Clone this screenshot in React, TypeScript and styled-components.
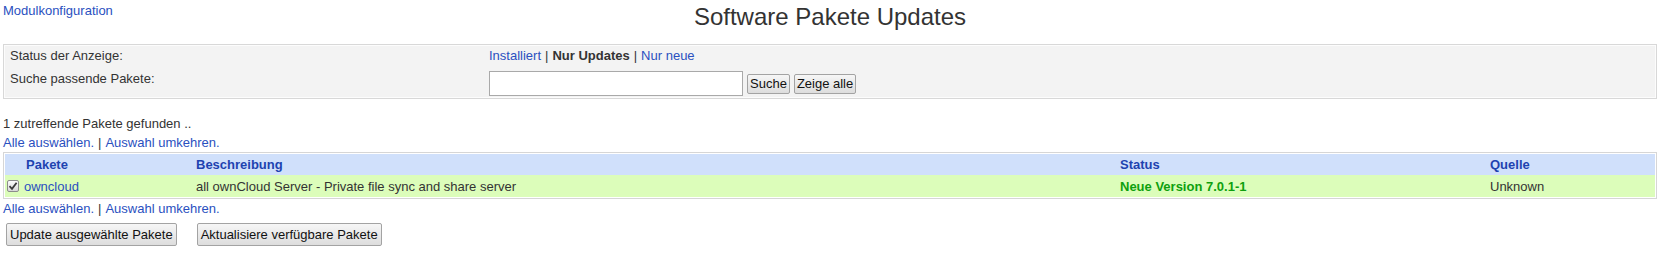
import styled, { createGlobalStyle } from "styled-components";

const GlobalStyle = createGlobalStyle`
  body {
    margin: 0;
    background: #fff;
    color: #333;
    font-family: "Liberation Sans", Arial, sans-serif;
    font-size: 13px;
  }
`;

const Page = styled.div`
  padding: 3px 8px 0 3px;
`;

const TopBar = styled.div`
  display: grid;
  grid-template-columns: 1fr auto 1fr;
  align-items: start;
`;

const Link = styled.a`
  color: #2a50c0;
  text-decoration: none;
  cursor: pointer;
`;

const ModuleLink = styled(Link)`
  line-height: 15px;
`;

const Title = styled.h1`
  margin: 0;
  font-size: 24px;
  font-weight: normal;
  line-height: 28px;
  color: #333;
`;

const FilterBox = styled.div`
  margin-top: 13px;
  border: 1px solid #d8d8d8;
  box-shadow: inset 0 0 0 1px #fcfcfc;
  background: #f3f3f3;
  padding: 3px 5px 2px 6px;
  display: grid;
  grid-template-columns: 479px 1fr;
  row-gap: 7px;
  align-items: start;
  line-height: 16px;
`;

const Sep = styled.span`
  color: #333;
  padding: 0 4px;
`;

const Current = styled.b`
  color: #333;
`;

const SearchRow = styled.div`
  display: flex;
  align-items: center;
  gap: 4px;
`;

const SearchInput = styled.input`
  box-sizing: border-box;
  width: 254px;
  height: 25px;
  margin: 0;
  border: 1px solid #a9a9a9;
  background: #fff;
  font: inherit;
`;

const Button = styled.button<{ $big?: boolean }>`
  box-sizing: border-box;
  height: ${(p) => (p.$big ? "23px" : "20px")};
  margin: 0;
  padding: 0 ${(p) => (p.$big ? "3px" : "2px")};
  border: 1px solid #a3a3a3;
  border-radius: 2px;
  background: linear-gradient(#f6f6f6, #dddddd);
  color: #111;
  font-family: "Liberation Sans", Arial, sans-serif;
  font-size: 13px;
`;

const InfoLine = styled.div<{ $gap?: number }>`
  margin-top: ${(p) => p.$gap ?? 0}px;
  line-height: 19px;
`;

const Table = styled.div`
  border: 1px solid #d6d6d6;
  padding: 1px;
  background: #fff;
`;

const Row = styled.div<{ $head?: boolean }>`
  display: grid;
  grid-template-columns: 187px 924px 370px 1fr;
  align-items: center;
  height: ${(p) => (p.$head ? "21px" : "22px")};
  background: ${(p) => (p.$head ? "#d0e0fb" : "#dcfdba")};
  color: ${(p) => (p.$head ? "#1e43b0" : "#333")};
  font-weight: ${(p) => (p.$head ? "bold" : "normal")};
`;

const Cell = styled.div<{ $pad?: number }>`
  padding-left: ${(p) => p.$pad ?? 4}px;
  display: flex;
  align-items: center;
  gap: 5px;
`;

const StatusText = styled.span`
  color: #0ea00e;
  font-weight: bold;
`;

const CheckBox = styled.span`
  box-sizing: border-box;
  width: 12px;
  height: 12px;
  border: 1px solid #8c8c8c;
  border-radius: 2px;
  background: linear-gradient(#fcfcfc, #d9d9d9);
  display: inline-flex;
  align-items: center;
  justify-content: center;
`;

const Actions = styled.div`
  margin-top: 5px;
  padding-left: 3px;
  display: flex;
  gap: 20px;
`;

function SelectLinks({ gap }: { gap?: number }) {
  return (
    <InfoLine $gap={gap}>
      <Link>Alle auswählen.</Link>
      <Sep>|</Sep>
      <Link>Auswahl umkehren.</Link>
    </InfoLine>
  );
}

export default function App() {
  return (
    <Page>
      <GlobalStyle />
      <TopBar>
        <div>
          <ModuleLink>Modulkonfiguration</ModuleLink>
        </div>
        <Title>Software Pakete Updates</Title>
        <div />
      </TopBar>

      <FilterBox>
        <div>Status der Anzeige:</div>
        <div>
          <Link>Installiert</Link>
          <Sep>|</Sep>
          <Current>Nur Updates</Current>
          <Sep>|</Sep>
          <Link>Nur neue</Link>
        </div>
        <div>Suche passende Pakete:</div>
        <SearchRow>
          <SearchInput type="text" />
          <Button>Suche</Button>
          <Button>Zeige alle</Button>
        </SearchRow>
      </FilterBox>

      <InfoLine $gap={15}>1 zutreffende Pakete gefunden ..</InfoLine>
      <SelectLinks />

      <Table>
        <Row $head>
          <Cell $pad={21}>Pakete</Cell>
          <Cell>Beschreibung</Cell>
          <Cell>Status</Cell>
          <Cell>Quelle</Cell>
        </Row>
        <Row>
          <Cell $pad={2}>
            <CheckBox>
              <svg width="10" height="10" viewBox="0 0 10 10">
                <path d="M1.5 5.2 L4 7.8 L8.6 1.8" fill="none" stroke="#3a3a3a" strokeWidth="1.8" />
              </svg>
            </CheckBox>
            <Link>owncloud</Link>
          </Cell>
          <Cell>all ownCloud Server - Private file sync and share server</Cell>
          <Cell>
            <StatusText>Neue Version 7.0.1-1</StatusText>
          </Cell>
          <Cell>Unknown</Cell>
        </Row>
      </Table>

      <SelectLinks />

      <Actions>
        <Button $big>Update ausgewählte Pakete</Button>
        <Button $big>Aktualisiere verfügbare Pakete</Button>
      </Actions>
    </Page>
  );
}
